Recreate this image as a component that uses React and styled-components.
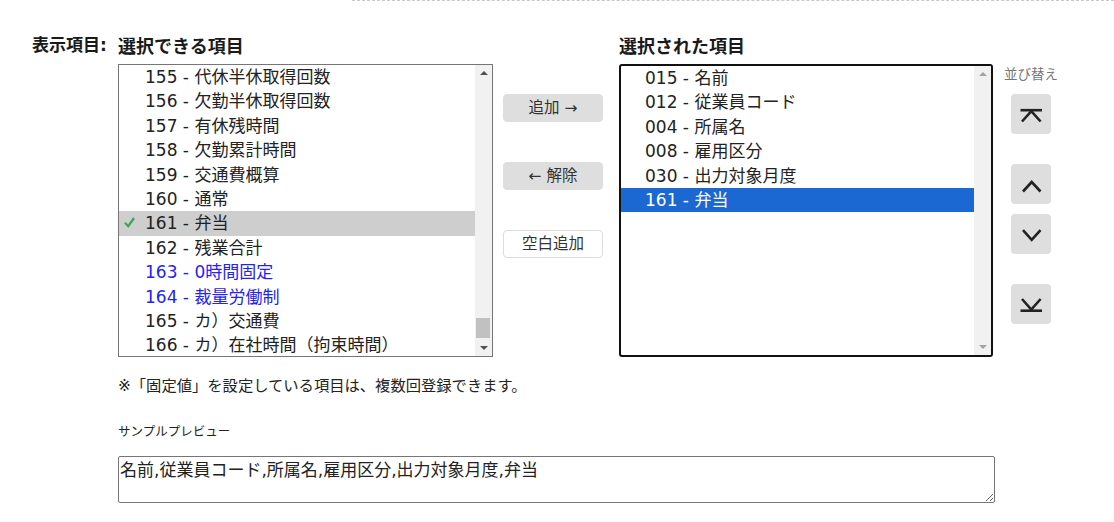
import React from "react";
import styled, { createGlobalStyle } from "styled-components";

const Global = createGlobalStyle`
  html, body { margin: 0; padding: 0; background: #fff; }
  body { font-family: "DejaVu Sans", "Noto Sans CJK JP", sans-serif; color: #222; }
  * { box-sizing: border-box; }
`;

const Page = styled.div`
  width: 1114px;
  height: 522px;
  overflow: hidden;
`;

const Divider = styled.div`
  margin-left: 352px;
  border-top: 1px dashed #c8c8c8;
`;

const Section = styled.div`
  display: flex;
  padding-left: 32px;
  margin-top: 34px;
`;

const FieldLabel = styled.div`
  width: 86px;
  font-size: 17px;
  font-weight: bold;
  line-height: 20px;
  color: #1a1a1a;
  white-space: nowrap;
`;

const Content = styled.div`
  display: flex;
  flex-direction: column;
`;

const ListsRow = styled.div`
  display: flex;
  align-items: flex-start;
`;

const Column = styled.div`
  display: flex;
  flex-direction: column;
  width: ${(p) => p.$w}px;
`;

const Heading = styled.div`
  font-family: "Noto Sans CJK JP", sans-serif;
  font-size: 18px;
  font-weight: bold;
  line-height: 20px;
  color: #1a1a1a;
  margin-bottom: 9px;
  white-space: nowrap;
`;

const ListBox = styled.div`
  display: flex;
  height: 293px;
  border: ${(p) => (p.$focused ? "2px solid #111" : "1px solid #767676")};
  border-radius: ${(p) => (p.$focused ? "3px" : "0")};
  overflow: hidden;
  background: #fff;
`;

const Items = styled.div`
  flex: 1;
  display: flex;
  flex-direction: column;
`;

const Item = styled.div`
  position: relative;
  height: 24.4px;
  line-height: 24.4px;
  font-size: 17px;
  padding-left: ${(p) => p.$pad}px;
  white-space: nowrap;
  color: ${(p) => (p.$selected === "blue" ? "#fff" : p.$blue ? "#2424ee" : "#222")};
  background: ${(p) =>
    p.$selected === "blue" ? "#1b68d3" : p.$selected === "gray" ? "#cecece" : "transparent"};
`;

const Check = styled.svg`
  position: absolute;
  left: 5px;
  top: 6px;
`;

const Scrollbar = styled.div`
  width: 17px;
  background: #f1f1f1;
  display: flex;
  flex-direction: column;
  align-items: center;
  justify-content: space-between;
  padding: 6px 0 6px;
  position: relative;
`;

const Arrow = styled.div`
  width: 0;
  height: 0;
  border-left: 4px solid transparent;
  border-right: 4px solid transparent;
  ${(p) =>
    p.$down
      ? `border-top: 4px solid ${p.$dim ? "#a3a3a3" : "#505050"};`
      : `border-bottom: 4px solid ${p.$dim ? "#a3a3a3" : "#505050"};`}
`;

const Thumb = styled.div`
  position: absolute;
  left: 1px;
  right: 2px;
  bottom: 18px;
  height: 20px;
  background: #c1c1c1;
`;

const ButtonsCol = styled.div`
  width: 100px;
  margin: 59px 16px 0 10px;
  display: flex;
  flex-direction: column;
  gap: 40px;
`;

const MoveButton = styled.button`
  height: 28px;
  border-radius: 4px;
  border: 1px solid ${(p) => (p.$outline ? "#dcdcdc" : "#dedede")};
  background: ${(p) => (p.$outline ? "#fff" : "#dedede")};
  font-family: "DejaVu Sans", "Noto Sans CJK JP", sans-serif;
  font-size: 15.5px;
  color: #333;
  padding: 0;
  line-height: 26px;
`;

const SortCol = styled.div`
  width: 54px;
  margin-left: 11px;
  margin-top: 29px;
  display: flex;
  flex-direction: column;
  align-items: center;
`;

const SortLabel = styled.div`
  font-family: "Noto Sans CJK JP", sans-serif;
  font-size: 13.5px;
  line-height: 18px;
  color: #777;
  margin-bottom: 12px;
  white-space: nowrap;
`;

const SortButton = styled.button`
  width: 40px;
  height: 40px;
  border: none;
  border-radius: 4px;
  background: #dedede;
  padding: 0;
  display: block;
  margin-top: ${(p) => p.$mt || 0}px;
  svg { display: block; }
`;

const Note = styled.div`
  margin-top: 19px;
  font-size: 15.3px;
  line-height: 20px;
  color: #222;
  white-space: nowrap;
`;

const SampleLabel = styled.div`
  margin-top: 27px;
  font-size: 12.5px;
  line-height: 18px;
  color: #222;
`;

const Preview = styled.textarea`
  margin-top: 15px;
  width: 877px;
  height: 47px;
  border: 1px solid #767676;
  border-radius: 2px;
  font-family: "DejaVu Sans", "Noto Sans CJK JP", sans-serif;
  font-size: 17px;
  line-height: 22px;
  padding: 2px 1px;
  color: #222;
  resize: both;
`;

const leftItems = [
  { t: "155 - 代休半休取得回数" },
  { t: "156 - 欠勤半休取得回数" },
  { t: "157 - 有休残時間" },
  { t: "158 - 欠勤累計時間" },
  { t: "159 - 交通費概算" },
  { t: "160 - 通常" },
  { t: "161 - 弁当", sel: true },
  { t: "162 - 残業合計" },
  { t: "163 - 0時間固定", blue: true },
  { t: "164 - 裁量労働制", blue: true },
  { t: "165 - カ）交通費" },
  { t: "166 - カ）在社時間（拘束時間）" },
];

const rightItems = [
  { t: "015 - 名前" },
  { t: "012 - 従業員コード" },
  { t: "004 - 所属名" },
  { t: "008 - 雇用区分" },
  { t: "030 - 出力対象月度" },
  { t: "161 - 弁当", sel: true },
];

const Icon = ({ children }) => (
  <svg width="40" height="40" viewBox="0 0 40 40" fill="none" stroke="#222" strokeWidth="2.6" strokeLinecap="butt" strokeLinejoin="miter">
    {children}
  </svg>
);

export default function App() {
  return (
    <Page>
      <Global />
      <Divider />
      <Section>
        <FieldLabel>表示項目:</FieldLabel>
        <Content>
          <ListsRow>
            <Column $w={375}>
              <Heading>選択できる項目</Heading>
              <ListBox>
                <Items>
                  {leftItems.map((it) => (
                    <Item key={it.t} $pad={26} $blue={it.blue} $selected={it.sel ? "gray" : null}>
                      {it.sel && (
                        <Check width="11" height="11" viewBox="0 0 11 11" fill="none">
                          <path d="M1 5.8L4.2 9.2L10 1" stroke="#3aa757" strokeWidth="2.2" />
                        </Check>
                      )}
                      {it.t}
                    </Item>
                  ))}
                </Items>
                <Scrollbar>
                  <Arrow />
                  <Thumb />
                  <Arrow $down />
                </Scrollbar>
              </ListBox>
            </Column>
            <ButtonsCol>
              <MoveButton>追加 →</MoveButton>
              <MoveButton>← 解除</MoveButton>
              <MoveButton $outline>空白追加</MoveButton>
            </ButtonsCol>
            <Column $w={374}>
              <Heading>選択された項目</Heading>
              <ListBox $focused>
                <Items>
                  {rightItems.map((it) => (
                    <Item key={it.t} $pad={24} $selected={it.sel ? "blue" : null}>
                      {it.t}
                    </Item>
                  ))}
                </Items>
                <Scrollbar>
                  <Arrow $dim />
                  <Arrow $down $dim />
                </Scrollbar>
              </ListBox>
            </Column>
            <SortCol>
              <SortLabel>並び替え</SortLabel>
              <SortButton aria-label="top">
                <Icon>
                  <path d="M9.5 16.2H31" />
                  <path d="M11 27.5L20.3 17.2L29.6 27.5" />
                </Icon>
              </SortButton>
              <SortButton $mt={30} aria-label="up">
                <Icon>
                  <path d="M12 27.5L20.7 18L29.5 27.5" />
                </Icon>
              </SortButton>
              <SortButton $mt={10} aria-label="down">
                <Icon>
                  <path d="M12 16.2L20.7 25.8L29.5 16.2" />
                </Icon>
              </SortButton>
              <SortButton $mt={30} aria-label="bottom">
                <Icon>
                  <path d="M11 15L20.3 25.6L29.6 15" />
                  <path d="M9.5 26.7H31" />
                </Icon>
              </SortButton>
            </SortCol>
          </ListsRow>
          <Note>※「固定値」を設定している項目は、複数回登録できます。</Note>
          <SampleLabel>サンプルプレビュー</SampleLabel>
          <Preview readOnly value="名前,従業員コード,所属名,雇用区分,出力対象月度,弁当" />
        </Content>
      </Section>
    </Page>
  );
}
